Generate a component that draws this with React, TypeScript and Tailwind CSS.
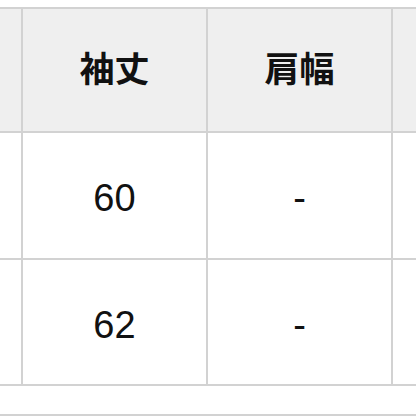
export default function App() {
  const headers = ["着丈", "袖丈", "肩幅", "身幅"];
  const rows = [
    ["70", "60", "-", "-"],
    ["72", "62", "-", "-"],
  ];

  return (
    <div
      className="w-[416px] h-[416px] overflow-hidden bg-white pt-[7px]"
      style={{ fontFamily: '"Liberation Sans", "Noto Sans CJK JP", sans-serif' }}
    >
      {/* Size table, wider than the viewport on both sides */}
      <div className="ml-[-164px] w-max grid grid-cols-[183px_183px_183px_183px] grid-rows-[122px_125px_124px] gap-[2px] border-2 border-[#d2d2d2] bg-[#d2d2d2] text-[#111]">
        {headers.map((h) => (
          <div
            key={h}
            className="flex items-center justify-center bg-[#efefef] text-[35px] font-bold"
          >
            {h}
          </div>
        ))}
        {rows.map((r, i) =>
          r.map((v, j) => (
            <div
              key={`${i}-${j}`}
              className="flex items-center justify-center bg-white text-[38px] pt-[6px]"
            >
              {v}
            </div>
          ))
        )}
      </div>

      <div className="mt-[28px] h-[2px] bg-[#d2d2d2]" />
    </div>
  );
}
